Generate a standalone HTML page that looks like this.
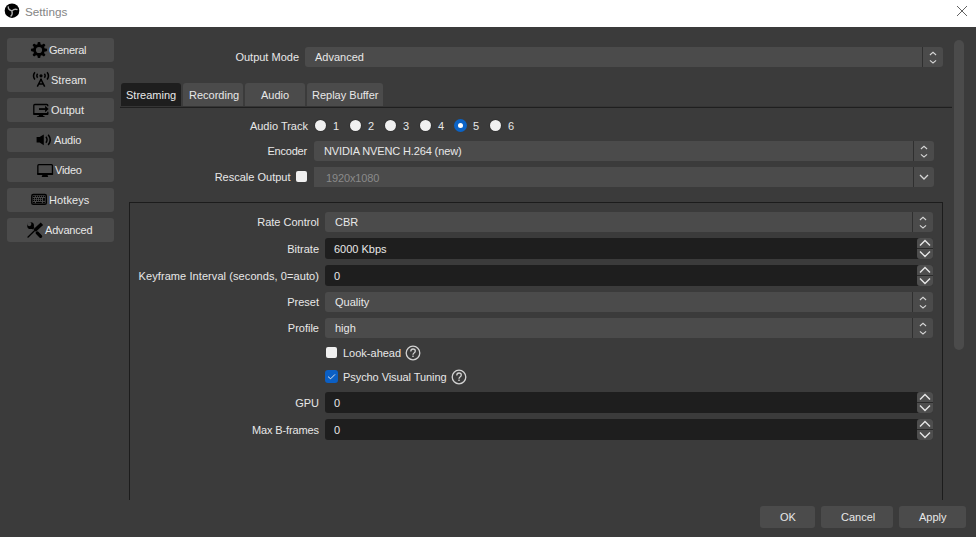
<!DOCTYPE html>
<html><head><meta charset="utf-8">
<style>
*{box-sizing:border-box;margin:0;padding:0}
html,body{width:976px;height:537px;overflow:hidden;background:#3b3b3b;font-family:"Liberation Sans",sans-serif;font-size:11px;color:#e8e8e8}
.a{position:absolute}
.sb{position:absolute;left:7px;width:107px;height:24px;border-radius:3px;background:#4b4b4b}
.t{position:absolute;white-space:nowrap;line-height:13px}
.r{text-align:right}
.cb{position:absolute;background:#4b4b4b;border-radius:3px}
.inp{position:absolute;background:#1e1e1e;border-radius:3px}
.sep{position:absolute;top:0;bottom:0;width:1px;background:#2f2f2f}
.tab{position:absolute;top:83px;height:23px;border-radius:3px 3px 0 0;background:#4b4b4b}
.btn{position:absolute;top:506px;height:22px;border-radius:3px;background:#4b4b4b}
.radio{position:absolute;width:12px;height:12px;border-radius:50%;background:#f0f0f0;box-shadow:0 0 0 1px #333}
.chk{position:absolute;width:11px;height:11px;border-radius:2px;background:#f0f0f0}
</style></head><body>

<div class="a" style="left:0;top:0;width:976px;height:27px;background:#fff">
<svg class="a" style="left:0;top:0" width="24" height="24" viewBox="0 0 24 24">
<circle cx="12" cy="10.7" r="7.3" fill="#000"/>
<path d="M8.4 6.3C7.9 8.2 9 9.9 11.9 10.9M11.9 10.9C13.6 9.3 15.5 8.8 17.5 9.7M11.9 10.9C12.6 13 12.3 15 10.6 16.5" fill="none" stroke="#b0b0b0" stroke-width="1.35"/>
</svg>
<div class="t" style="left:25px;top:5px;font-size:11.7px;color:#858585">Settings</div>
<svg class="a" style="left:956px;top:5px" width="12" height="12" viewBox="0 0 12 12">
<path d="M1 1L11 11M11 1L1 11" stroke="#5a5a5a" stroke-width="0.95"/>
</svg>
</div>
<div class="sb" style="top:38px"></div>
<div class="sb" style="top:68px"></div>
<div class="sb" style="top:98px"></div>
<div class="sb" style="top:128px"></div>
<div class="sb" style="top:158px"></div>
<div class="sb" style="top:188px"></div>
<div class="sb" style="top:218px"></div>
<div class="t" style="left:49px;top:44px;letter-spacing:-0.28px">General</div>
<div class="t" style="left:51px;top:74px;letter-spacing:0px">Stream</div>
<div class="t" style="left:51px;top:104px;letter-spacing:0px">Output</div>
<div class="t" style="left:54px;top:134px;letter-spacing:-0.2px">Audio</div>
<div class="t" style="left:55px;top:164px;letter-spacing:-0.24px">Video</div>
<div class="t" style="left:49px;top:194px;letter-spacing:0.1px">Hotkeys</div>
<div class="t" style="left:45px;top:224px;letter-spacing:-0.19px">Advanced</div>
<svg class="a" style="left:0;top:0" width="120" height="250" viewBox="0 0 120 250">
<g fill="#000"><rect x="37.55" y="41.9" width="2.9" height="4" rx="1.1" transform="rotate(0 39 50)"/><rect x="37.55" y="41.9" width="2.9" height="4" rx="1.1" transform="rotate(45 39 50)"/><rect x="37.55" y="41.9" width="2.9" height="4" rx="1.1" transform="rotate(90 39 50)"/><rect x="37.55" y="41.9" width="2.9" height="4" rx="1.1" transform="rotate(135 39 50)"/><rect x="37.55" y="41.9" width="2.9" height="4" rx="1.1" transform="rotate(180 39 50)"/><rect x="37.55" y="41.9" width="2.9" height="4" rx="1.1" transform="rotate(225 39 50)"/><rect x="37.55" y="41.9" width="2.9" height="4" rx="1.1" transform="rotate(270 39 50)"/><rect x="37.55" y="41.9" width="2.9" height="4" rx="1.1" transform="rotate(315 39 50)"/></g>
<circle cx="39" cy="50" r="4.5" fill="none" stroke="#000" stroke-width="2.8"/>
<!-- stream -->
<circle cx="41" cy="75.8" r="1.6" fill="#000"/>
<path d="M37.6 73.8Q36 75.8 37.6 77.8M44.4 73.8Q46 75.8 44.4 77.8" fill="none" stroke="#000" stroke-width="1.4"/>
<path d="M34.9 72.3Q32.2 75.9 34.9 79.5M47.1 72.3Q49.8 75.9 47.1 79.5" fill="none" stroke="#000" stroke-width="1.5"/>
<path d="M37.3 86.6L41 79.3L44.7 86.6M38.6 83.9H43.4" fill="none" stroke="#000" stroke-width="1.5"/><path d="M40 79.6H42" stroke="#000" stroke-width="1.3"/>
<!-- output -->
<path d="M47.8 106.3V105.5Q47.8 104.5 46.8 104.5H34.8Q33.8 104.5 33.8 105.5V113.4Q33.8 114.4 34.8 114.4H46.8Q47.8 114.4 47.8 113.4V111.7" fill="none" stroke="#000" stroke-width="1.3"/>
<rect x="33.3" y="113.1" width="15" height="1.9" rx="0.8" fill="#000"/>
<path d="M39.2 114.6H42.8L43.4 116.1Q44.8 116.3 44.8 117H36.8Q36.8 116.3 38.6 116.1Z" fill="#000"/>
<rect x="39" y="108.2" width="6.4" height="1.7" fill="#000"/>
<path d="M45.1 105.8L48.6 109.05L45.1 112.3Z" fill="#000"/>
<!-- audio -->
<path d="M36.6 137H39.6L43.8 134.6V145.2L39.6 142.6H36.6Z" fill="#000"/>
<path d="M45.9 136.8Q48.2 139.8 45.9 142.8" fill="none" stroke="#000" stroke-width="1.4"/>
<path d="M48.2 134.8Q52.2 139.9 48.2 145" fill="none" stroke="#000" stroke-width="1.5"/>
<!-- video -->
<rect x="37.85" y="164.65" width="14.6" height="9.6" rx="1" fill="none" stroke="#000" stroke-width="1.3"/>
<rect x="37.2" y="173" width="15.9" height="1.9" fill="#000"/>
<path d="M42.6 174.6H47.4L48.2 176.9H41.6Z" fill="#000"/>
<!-- hotkeys -->
<rect x="31.8" y="194.5" width="14.5" height="9.8" rx="1.4" fill="none" stroke="#000" stroke-width="1.4"/>
<g fill="#000">
<rect x="32.9" y="195.8" width="1.9" height="1.2"/>
<rect x="35.9" y="195.8" width="1.2" height="1.2"/><rect x="37.9" y="195.8" width="1.2" height="1.2"/><rect x="39.9" y="195.8" width="1.2" height="1.2"/><rect x="41.9" y="195.8" width="1.2" height="1.2"/><rect x="43.9" y="195.8" width="1.2" height="1.2"/>
<rect x="32.8" y="197.9" width="1.2" height="1.2"/><rect x="34.8" y="197.9" width="1.2" height="1.2"/><rect x="36.8" y="197.9" width="1.2" height="1.2"/><rect x="38.8" y="197.9" width="1.2" height="1.2"/><rect x="40.8" y="197.9" width="1.2" height="1.2"/>
<rect x="43.1" y="197.9" width="1.7" height="3"/>
<rect x="32.8" y="199.8" width="1.2" height="1.2"/><rect x="34.8" y="199.8" width="1.2" height="1.2"/><rect x="36.8" y="199.8" width="1.2" height="1.2"/><rect x="38.8" y="199.8" width="1.2" height="1.2"/><rect x="40.8" y="199.8" width="1.2" height="1.2"/>
<rect x="32.9" y="201.9" width="2" height="1.2"/><rect x="36" y="201.9" width="5.9" height="1.2"/><rect x="42.9" y="201.9" width="2" height="1.2"/>
</g>
<!-- advanced -->
<mask id="wm"><rect x="20" y="215" width="30" height="30" fill="#fff"/><circle cx="29.3" cy="224.1" r="2.1" fill="#000"/></mask>
<g mask="url(#wm)"><circle cx="30.6" cy="225.7" r="3.4" fill="#000"/><path d="M31.5 226.5L33.6 228.6" stroke="#000" stroke-width="2.4"/></g>
<path d="M37.2 232.9L40.6 236.3" stroke="#000" stroke-width="3.2" stroke-linecap="round"/>
<path d="M41.9 223.7L34.7 230.5" stroke="#000" stroke-width="3.5"/>
<path d="M35 230.3L27.6 237.5" stroke="#000" stroke-width="1.2"/>
</svg>
<div class="t r" style="right:677px;top:51px;letter-spacing:0px">Output Mode</div>
<div class="cb" style="left:305px;top:47px;width:638px;height:20px"><div class="sep" style="left:617px"></div></div>
<svg class="a" style="left:928px;top:47px" width="10" height="20" viewBox="928 47 10 20"><path d="M929.9 55.0L933 52.3L936.1 55.0M929.9 60.4L933 63.0L936.1 60.4" fill="none" stroke="#d6d6d6" stroke-width="1.05"/></svg>
<div class="t" style="left:315px;top:51px">Advanced</div>
<div class="a" style="left:120px;top:106px;width:832px;height:1px;background:#353535"></div><div class="a" style="left:120px;top:107px;width:832px;height:1px;background:#1f1f1f"></div>
<div class="tab" style="left:121px;width:60px;background:#1e1e1e"></div>
<div class="tab" style="left:183px;width:60px"></div>
<div class="tab" style="left:245px;width:60px"></div>
<div class="tab" style="left:307px;width:76px"></div>
<div class="t" style="left:126px;top:89px">Streaming</div>
<div class="t" style="left:189px;top:89px">Recording</div>
<div class="t" style="left:261px;top:89px">Audio</div>
<div class="t" style="left:312px;top:89px">Replay Buffer</div>
<div class="t r" style="right:668px;top:120px;letter-spacing:0px">Audio Track</div>
<div class="radio" style="left:314.7px;top:119.5px;width:11.6px;height:11.6px"></div>
<div class="t" style="left:333px;top:120px">1</div>
<div class="radio" style="left:349.7px;top:119.5px;width:11.6px;height:11.6px"></div>
<div class="t" style="left:368px;top:120px">2</div>
<div class="radio" style="left:384.7px;top:119.5px;width:11.6px;height:11.6px"></div>
<div class="t" style="left:403px;top:120px">3</div>
<div class="radio" style="left:419.7px;top:119.5px;width:11.6px;height:11.6px"></div>
<div class="t" style="left:438px;top:120px">4</div>
<div class="a" style="left:454.0px;top:119px;width:13px;height:13px;border-radius:50%;background:#0b63c6"></div>
<div class="a" style="left:457.9px;top:122.9px;width:5.2px;height:5.2px;border-radius:50%;background:#fff"></div>
<div class="t" style="left:473px;top:120px">5</div>
<div class="radio" style="left:489.7px;top:119.5px;width:11.6px;height:11.6px"></div>
<div class="t" style="left:508px;top:120px">6</div>
<div class="t r" style="right:669px;top:145px;letter-spacing:-0.2px">Encoder</div>
<div class="cb" style="left:314px;top:141px;width:620px;height:20px;"><div class="sep" style="left:599px"></div></div><svg class="a" style="left:919px;top:141px" width="10" height="20" viewBox="919 141 10 20"><path d="M920.9 149.0L924 146.3L927.1 149.0M920.9 154.4L924 157.0L927.1 154.4" fill="none" stroke="#d6d6d6" stroke-width="1.05"/></svg><div class="t" style="left:324px;top:145px"><span style="letter-spacing:-0.13px">NVIDIA NVENC H.264 (new)</span></div>
<div class="t r" style="right:685.5px;top:171px;letter-spacing:0px">Rescale Output</div>
<div class="chk" style="left:296px;top:171px"></div>
<div class="cb" style="left:314px;top:167px;width:620px;height:20px;border-radius:0 3px 3px 0"><div class="sep" style="left:599px"></div></div><svg class="a" style="left:918px;top:167px" width="12" height="20" viewBox="918 167 12 20"><path d="M920 175.0L924 179.0L928 175.0" fill="none" stroke="#d6d6d6" stroke-width="1.3"/></svg><div class="t" style="left:326px;top:172px;color:#8a8a8a"><span style="letter-spacing:-0.12px">1920x1080</span></div>
<div class="a" style="left:129px;top:202px;width:814px;height:298px;border:1px solid #1c1c1c;border-bottom:none"></div>
<div class="t r" style="right:657px;top:216px;letter-spacing:0px">Rate Control</div>
<div class="cb" style="left:325px;top:212px;width:608px;height:20px;"><div class="sep" style="left:587px"></div></div><svg class="a" style="left:918px;top:212px" width="10" height="20" viewBox="918 212 10 20"><path d="M919.9 220.0L923 217.3L926.1 220.0M919.9 225.4L923 228.0L926.1 225.4" fill="none" stroke="#d6d6d6" stroke-width="1.05"/></svg><div class="t" style="left:335px;top:216px">CBR</div>
<div class="t r" style="right:657px;top:243px;letter-spacing:0px">Bitrate</div>
<div class="inp" style="left:325px;top:238px;width:608px;height:21px"></div><div class="a" style="left:917px;top:238px;width:16px;height:10px;background:#4e4e4e;border-radius:3px 3px 0 0"></div><div class="a" style="left:917px;top:248px;width:16px;height:1px;background:#2a2a2a"></div><div class="a" style="left:917px;top:249px;width:16px;height:10px;background:#4e4e4e;border-radius:0 0 3px 3px"></div><svg class="a" style="left:917px;top:238px" width="16" height="21" viewBox="917 238 16 21"><path d="M920 245.6L925 240.6L930 245.6M920 251.4L925 256.4L930 251.4" fill="none" stroke="#e6e6e6" stroke-width="1.4"/></svg><div class="t" style="left:334px;top:243px">6000 Kbps</div>
<div class="t r" style="right:657px;top:270px;letter-spacing:0.08px">Keyframe Interval (seconds, 0=auto)</div>
<div class="inp" style="left:325px;top:265px;width:608px;height:21px"></div><div class="a" style="left:917px;top:265px;width:16px;height:10px;background:#4e4e4e;border-radius:3px 3px 0 0"></div><div class="a" style="left:917px;top:275px;width:16px;height:1px;background:#2a2a2a"></div><div class="a" style="left:917px;top:276px;width:16px;height:10px;background:#4e4e4e;border-radius:0 0 3px 3px"></div><svg class="a" style="left:917px;top:265px" width="16" height="21" viewBox="917 265 16 21"><path d="M920 272.6L925 267.6L930 272.6M920 278.4L925 283.4L930 278.4" fill="none" stroke="#e6e6e6" stroke-width="1.4"/></svg><div class="t" style="left:334px;top:270px">0</div>
<div class="t r" style="right:657px;top:296px;letter-spacing:0px">Preset</div>
<div class="cb" style="left:325px;top:292px;width:608px;height:20px;"><div class="sep" style="left:587px"></div></div><svg class="a" style="left:918px;top:292px" width="10" height="20" viewBox="918 292 10 20"><path d="M919.9 300.0L923 297.3L926.1 300.0M919.9 305.4L923 308.0L926.1 305.4" fill="none" stroke="#d6d6d6" stroke-width="1.05"/></svg><div class="t" style="left:335px;top:296px">Quality</div>
<div class="t r" style="right:657px;top:322px;letter-spacing:0px">Profile</div>
<div class="cb" style="left:325px;top:318px;width:608px;height:20px;"><div class="sep" style="left:587px"></div></div><svg class="a" style="left:918px;top:318px" width="10" height="20" viewBox="918 318 10 20"><path d="M919.9 326.0L923 323.3L926.1 326.0M919.9 331.4L923 334.0L926.1 331.4" fill="none" stroke="#d6d6d6" stroke-width="1.05"/></svg><div class="t" style="left:335px;top:322px">high</div>
<div class="chk" style="left:326px;top:347px"></div>
<div class="t" style="left:343px;top:347px">Look-ahead</div>
<div class="a" style="left:325px;top:370px;width:13px;height:13px;border-radius:3px;background:#0b5fc4"></div>
<svg class="a" style="left:325px;top:370px" width="13" height="13" viewBox="325 370 13 13"><path d="M328 376.6L330.6 378.8L335 374.4" fill="none" stroke="#f4f4f4" stroke-width="0.9"/></svg>
<div class="t" style="left:343px;top:371px;letter-spacing:-0.07px">Psycho Visual Tuning</div>
<svg class="a" style="left:404px;top:344px" width="18" height="18" viewBox="404 344 18 18"><circle cx="413" cy="353" r="6.8" fill="none" stroke="#d2d2d2" stroke-width="1.3"/><path d="M410.8 351.4Q410.8 349 413 349Q415.3 349 415.3 351.1Q415.3 352.4 413.8 353.2Q413 353.7 413 354.8" fill="none" stroke="#d2d2d2" stroke-width="1.3"/><rect x="412.3" y="355.6" width="1.4" height="1.4" fill="#d2d2d2"/></svg>
<svg class="a" style="left:450px;top:368px" width="18" height="18" viewBox="450 368 18 18"><circle cx="459" cy="377" r="6.8" fill="none" stroke="#d2d2d2" stroke-width="1.3"/><path d="M456.8 375.4Q456.8 373 459 373Q461.3 373 461.3 375.1Q461.3 376.4 459.8 377.2Q459 377.7 459 378.8" fill="none" stroke="#d2d2d2" stroke-width="1.3"/><rect x="458.3" y="379.6" width="1.4" height="1.4" fill="#d2d2d2"/></svg>
<div class="t r" style="right:657px;top:397px;letter-spacing:0px">GPU</div>
<div class="inp" style="left:325px;top:392px;width:608px;height:21px"></div><div class="a" style="left:917px;top:392px;width:16px;height:10px;background:#4e4e4e;border-radius:3px 3px 0 0"></div><div class="a" style="left:917px;top:402px;width:16px;height:1px;background:#2a2a2a"></div><div class="a" style="left:917px;top:403px;width:16px;height:10px;background:#4e4e4e;border-radius:0 0 3px 3px"></div><svg class="a" style="left:917px;top:392px" width="16" height="21" viewBox="917 392 16 21"><path d="M920 399.6L925 394.6L930 399.6M920 405.4L925 410.4L930 405.4" fill="none" stroke="#e6e6e6" stroke-width="1.4"/></svg><div class="t" style="left:334px;top:397px">0</div>
<div class="t r" style="right:657px;top:424px;letter-spacing:-0.12px">Max B-frames</div>
<div class="inp" style="left:325px;top:419px;width:608px;height:21px"></div><div class="a" style="left:917px;top:419px;width:16px;height:10px;background:#4e4e4e;border-radius:3px 3px 0 0"></div><div class="a" style="left:917px;top:429px;width:16px;height:1px;background:#2a2a2a"></div><div class="a" style="left:917px;top:430px;width:16px;height:10px;background:#4e4e4e;border-radius:0 0 3px 3px"></div><svg class="a" style="left:917px;top:419px" width="16" height="21" viewBox="917 419 16 21"><path d="M920 426.6L925 421.6L930 426.6M920 432.4L925 437.4L930 432.4" fill="none" stroke="#e6e6e6" stroke-width="1.4"/></svg><div class="t" style="left:334px;top:424px">0</div>
<div class="a" style="left:954px;top:40px;width:10px;height:310px;border-radius:5px;background:#4b4b4b"></div>
<div class="btn" style="left:760px;width:55px"></div>
<div class="btn" style="left:821px;width:72px"></div>
<div class="btn" style="left:899px;width:67px"></div>
<div class="t" style="left:780px;top:511px">OK</div>
<div class="t" style="left:841px;top:511px">Cancel</div>
<div class="t" style="left:919px;top:511px">Apply</div>
</body></html>
